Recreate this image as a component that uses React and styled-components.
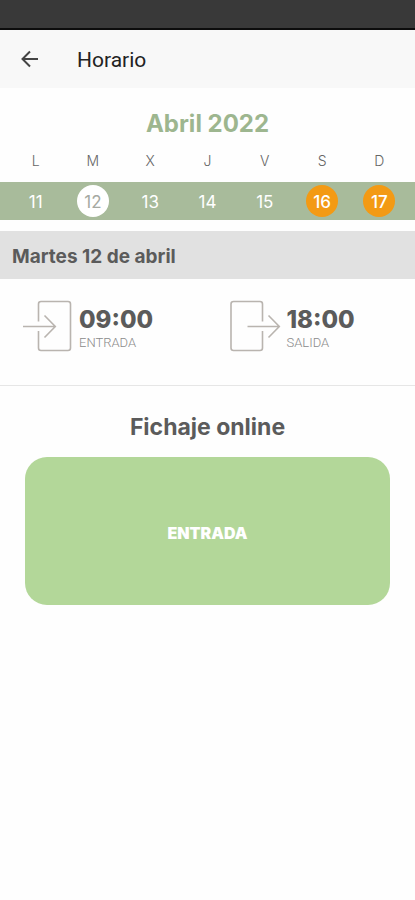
import React from 'react';
import styled, { createGlobalStyle } from 'styled-components';

const GlobalStyle = createGlobalStyle`
  * {
    box-sizing: border-box;
  }
  body {
    margin: 0;
    background-color: #fefefe;
    font-family: Inter, 'Liberation Sans', sans-serif;
  }
`;

const StatusBar = styled.div`
  height: 30px;
  background-color: #393939;
  border-bottom: 2px solid #0c0c0c;
`;
const Header = styled.header`
  display: flex;
  align-items: center;
  height: 58px;
  padding: 2px 20px 0;
  gap: 37px;
  background-color: #f8f8f8;
`;
const BackButton = styled.button`
  display: flex;
  padding: 0;
  border: none;
  background: none;
  cursor: pointer;
`;
const HeaderTitle = styled.h1`
  margin: 0;
  font-family: Roboto, sans-serif;
  font-size: 21px;
  font-weight: 400;
  line-height: 24px;
  color: #222;
`;
const Month = styled.h2`
  margin: 0;
  padding-top: 21px;
  font-size: 24px;
  font-weight: 700;
  line-height: 30px;
  text-align: center;
  color: #9db68f;
`;
const Week = styled.table`
  width: 100%;
  border-collapse: collapse;
  table-layout: fixed;
`;
const WeekRow = styled.tr`
  display: grid;
  grid-template-columns: repeat(7, 1fr);
  align-items: center;
  padding: 0 7px;
  height: ${({ $band }) => ($band ? '38px' : '43px')};
  background-color: ${({ $band }) => ($band ? '#a8bb9b' : 'transparent')};
`;
const WeekDay = styled.th`
  padding: 0;
  font-size: 14px;
  font-weight: 300;
  line-height: 20px;
  text-align: center;
  color: #666;
`;
const DayCell = styled.td`
  display: flex;
  justify-content: center;
  padding: 0;
`;

const dayColors = {
  normal: { background: 'transparent', text: '#fff' },
  selected: { background: '#fff', text: '#a5a9a2' },
  holiday: { background: '#f39a14', text: '#fff' },
};

const Day = styled.button`
  width: 32px;
  height: 32px;
  padding: 2px 0 0;
  border: none;
  border-radius: 50%;
  background-color: ${({ $kind }) => dayColors[$kind].background};
  color: ${({ $kind }) => dayColors[$kind].text};
  font-family: inherit;
  font-size: 17px;
  font-weight: ${({ $kind }) => ($kind === 'holiday' ? 500 : 400)};
  line-height: 20px;
  cursor: pointer;
`;
const DateBar = styled.h3`
  margin: 11px 0 0;
  padding: 14px 12px 10px;
  font-size: 19px;
  font-weight: 700;
  line-height: 24px;
  color: #5b5b5b;
  background-color: #e1e1e1;
`;
const Times = styled.section`
  display: grid;
  grid-template-columns: 1fr 1fr;
  padding: 21px 0 32px;
  border-bottom: 1px solid #e6e6e6;
`;
const TimeItem = styled.div`
  display: flex;
  gap: 6px;
  padding-left: 22px;
`;
const TimeText = styled.div`
  display: flex;
  flex-direction: column;
  padding-top: 7px;
`;
const Hour = styled.strong`
  font-size: 24px;
  font-weight: 800;
  line-height: 26px;
  color: #5b5b5b;
`;
const Label = styled.span`
  font-family: Roboto, sans-serif;
  font-size: 13px;
  font-weight: 300;
  line-height: 20px;
  color: #8a8a8a;
`;
const ClockIn = styled.section`
  padding: 26px 25px 0;
`;
const ClockInTitle = styled.h2`
  margin: 0 0 15px;
  font-size: 23px;
  font-weight: 700;
  line-height: 30px;
  text-align: center;
  color: #5b5b5b;
`;
const ClockInButton = styled.button`
  display: block;
  width: 100%;
  height: 148px;
  padding: 4px 0 0;
  border: none;
  border-radius: 22px;
  background-color: #b3d799;
  color: #fff;
  font-family: inherit;
  font-size: 16px;
  font-weight: 900;
  line-height: 20px;
  cursor: pointer;
`;

const BackIcon = () => (
  <svg width="20" height="20" viewBox="0 0 20 20" fill="none" stroke="#444" strokeWidth="2" aria-hidden="true">
    <path d="M18 9H3M10 1.5L2.5 9L10 16.5" />
  </svg>
);

const DoorIn = () => (
  <svg width="51" height="52" viewBox="0 0 51 52" fill="none" stroke="#b9b4af" strokeWidth="1.6" aria-hidden="true">
    <path d="M16.5 21.5V4Q16.5 1.5 19 1.5H46Q48.5 1.5 48.5 4V48Q48.5 50.5 46 50.5H19Q16.5 50.5 16.5 48V31" />
    <path d="M1 26.5H33M22.5 15.5L33.3 26.5L22.5 37.5" />
  </svg>
);

const DoorOut = () => (
  <svg width="51" height="52" viewBox="0 0 51 52" fill="none" stroke="#b9b4af" strokeWidth="1.6" aria-hidden="true">
    <path d="M32.5 21.5V4Q32.5 1.5 30 1.5H3.5Q1 1.5 1 4V48Q1 50.5 3.5 50.5H30Q32.5 50.5 32.5 48V31" />
    <path d="M17.5 26.5H49M38.5 15.5L49.3 26.5L38.5 37.5" />
  </svg>
);

const weekDays = ['L', 'M', 'X', 'J', 'V', 'S', 'D'];

const days = [
  { number: 11, kind: 'normal' },
  { number: 12, kind: 'selected' },
  { number: 13, kind: 'normal' },
  { number: 14, kind: 'normal' },
  { number: 15, kind: 'normal' },
  { number: 16, kind: 'holiday' },
  { number: 17, kind: 'holiday' },
];

const App = () => (
  <>
    <GlobalStyle />
    <StatusBar />
    <Header>
      <BackButton aria-label="Volver">
        <BackIcon />
      </BackButton>
      <HeaderTitle>Horario</HeaderTitle>
    </Header>
    <main>
      <Month>Abril 2022</Month>
      <Week>
        <thead>
          <WeekRow>
            {weekDays.map((day) => (
              <WeekDay key={day} scope="col">{day}</WeekDay>
            ))}
          </WeekRow>
        </thead>
        <tbody>
          <WeekRow $band>
            {days.map(({ number, kind }) => (
              <DayCell key={number}>
                <Day $kind={kind}>{number}</Day>
              </DayCell>
            ))}
          </WeekRow>
        </tbody>
      </Week>
      <DateBar>Martes 12 de abril</DateBar>
      <Times>
        <TimeItem>
          <DoorIn />
          <TimeText>
            <Hour>09:00</Hour>
            <Label>ENTRADA</Label>
          </TimeText>
        </TimeItem>
        <TimeItem>
          <DoorOut />
          <TimeText>
            <Hour>18:00</Hour>
            <Label>SALIDA</Label>
          </TimeText>
        </TimeItem>
      </Times>
      <ClockIn>
        <ClockInTitle>Fichaje online</ClockInTitle>
        <ClockInButton>ENTRADA</ClockInButton>
      </ClockIn>
    </main>
  </>
);

export default App;
